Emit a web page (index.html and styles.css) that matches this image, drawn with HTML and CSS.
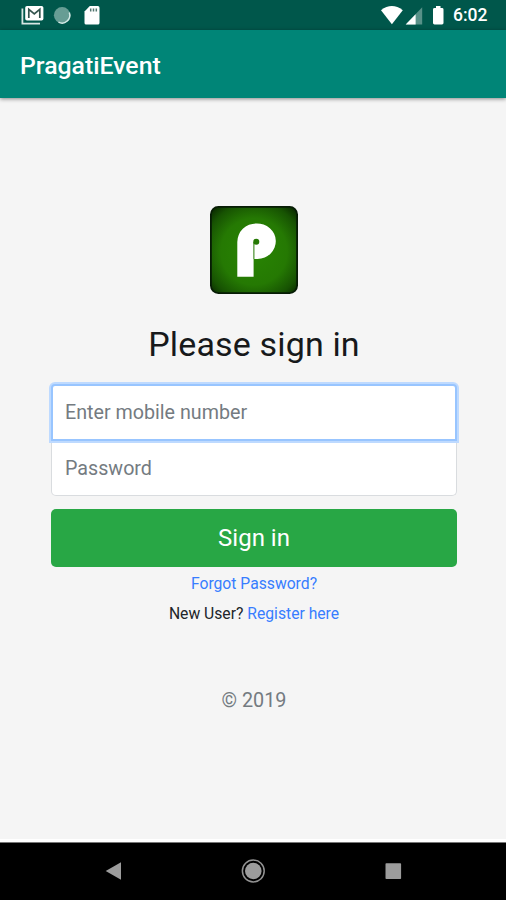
FILE: index.html
```html
<!DOCTYPE html>
<html lang="en">
<head>
<meta charset="utf-8">
<title>PragatiEvent</title>
<link rel="stylesheet" href="styles.css">
</head>
<body>
<div class="screen">
  <div class="status">
    <svg class="status-left" width="90" height="30" viewBox="0 0 90 30">
      <path d="M2.4 8.5V23.6H20" fill="none" stroke="#d7e6e3" stroke-width="1.8"/>
      <rect x="5.2" y="6" width="18.2" height="14.6" rx="1.8" fill="#fff"/>
      <path d="M8.8 18V9.3L14.3 13.8L19.8 9.3V18" fill="none" stroke="#34544e" stroke-width="1.7"/>
      <circle cx="42.1" cy="15.3" r="8.2" fill="#679d94"/>
      <path d="M49.3 12.5A7.8 7.8 0 0 1 38.5 22.2" fill="none" stroke="#d5eae6" stroke-width="1.5"/>
      <path d="M69.8 6H77.8Q79.5 6 79.5 7.7V23Q79.5 24.6 77.8 24.6H66.2Q64.5 24.6 64.5 23V11.5Z" fill="#fff"/>
      <path d="M70.7 8.5V11.5M73.5 8.5V11.5M76.3 8.5V11.5" stroke="#52766f" stroke-width="1.5"/>
    </svg>
    <div class="status-right">
      <svg width="64" height="30" viewBox="0 0 64 30">
        <path d="M0 10.2Q10.9 1.8 21.8 10.2L10.9 24.2Z" fill="#fff"/>
        <path d="M41.2 7.2V24.4H24.7Z" fill="#589188"/>
        <path d="M34.6 14.2V24.4H24.7Z" fill="#fff"/>
        <path d="M55 6H59.5V8H61Q62.5 8 62.5 9.4V23.1Q62.5 24.5 61 24.5H53.5Q52 24.5 52 23.1V9.4Q52 8 53.5 8H55Z" fill="#fff"/>
      </svg>
      <span class="clock">6:02</span>
    </div>
  </div>
  <header class="appbar">PragatiEvent</header>
  <main class="content">
    <svg class="logo" width="88" height="88" viewBox="0 0 88 88">
      <defs>
        <radialGradient id="green" cx=".5" cy=".52" r=".7">
          <stop offset="0" stop-color="#288403"/>
          <stop offset=".55" stop-color="#257903"/>
          <stop offset=".82" stop-color="#175302"/>
          <stop offset="1" stop-color="#082500"/>
        </radialGradient>
      </defs>
      <rect x=".9" y=".9" width="86.2" height="86.2" rx="7.5" fill="url(#green)" stroke="#071c05" stroke-width="1.8"/>
      <path fill="#fff" d="M27.3 70.7V36A19 18.5 0 0 1 46.3 17.4A18.9 17.8 0 0 1 47.5 53H43.6V70.7Z"/>
      <path d="M43.9 53V36" stroke="#257903" stroke-width="1"/>
      <circle cx="46.3" cy="35.8" r="3" fill="#257903"/>
    </svg>
    <h1 class="title">Please sign in</h1>
    <form class="form">
      <input class="field field-top" type="text" placeholder="Enter mobile number" aria-label="Mobile number">
      <input class="field field-bottom" type="password" placeholder="Password" aria-label="Password">
      <button class="submit" type="button">Sign in</button>
    </form>
    <div class="links"><a class="link">Forgot Password?</a></div>
    <div class="links">New User? <a class="link">Register here</a></div>
    <p class="copyright">© 2019</p>
  </main>
  <nav class="navbar">
    <svg width="24" height="24" viewBox="0 0 24 24"><path d="M4.7 12L20 3.2V20.8Z" fill="#9c9c9c"/></svg>
    <svg width="24" height="24" viewBox="0 0 24 24"><circle cx="12.3" cy="12" r="10.9" fill="none" stroke="#929292" stroke-width="1.5"/><circle cx="12.3" cy="12" r="8.3" fill="#9c9c9c"/></svg>
    <svg width="24" height="24" viewBox="0 0 24 24"><rect x="4.5" y="4.3" width="15.6" height="15.8" rx=".8" fill="#9c9c9c"/></svg>
  </nav>
</div>
</body>
</html>
```
FILE: styles.css
```css
* { box-sizing: border-box; }
body { margin: 0; font-family: Roboto, sans-serif; }
.screen { width: 506px; height: 900px; display: flex; flex-direction: column; background: #f5f5f5; overflow: hidden; }
.status { height: 30px; flex: none; display: flex; justify-content: space-between; background: #00574b; padding: 0 18px 0 20px; }
.status-right { display: flex; align-items: center; }
.status-right svg { margin-right: 8px; overflow: visible; }
.clock { color: #fff; font-size: 17.5px; font-weight: 500; line-height: 32px; width: 35px; white-space: nowrap; }
.appbar { height: 68px; flex: none; padding-left: 20px; background: #008577; color: #fff; font-size: 24.8px; font-weight: 500; line-height: 72px; box-shadow: 0 1px 4px rgba(0, 0, 0, .45); }
.content { flex: 1; display: flex; flex-direction: column; align-items: center; padding: 108px 0 0 2px; border-bottom: 3px solid #fff; color: #212529; }
.logo { display: block; flex: none; }
.title { margin: 30px 0 20px; font-size: 34px; font-weight: 400; line-height: 40px; color: #17191b; letter-spacing: .15px; }
.form { width: 406px; display: flex; flex-direction: column; }
.field { width: 100%; font: 400 19.7px/24px Roboto, sans-serif; color: #495057; background: #fff; padding: 0 13px; border: 1px solid #d9dcdf; outline: 0; }
.field::placeholder { color: #747b81; opacity: 1; }
.field-top { position: relative; height: 57px; border: 2px solid #98c5ff; border-radius: 4px 4px 0 0; box-shadow: 0 0 0 2px #bedaff; z-index: 1; padding: 0 12px; }
.field-bottom { height: 55px; border-top: 0; border-radius: 0 0 5px 5px; }
.submit { height: 58px; margin-top: 13px; border: 0; border-radius: 5px; background: #28a745; color: #fff; font: 400 24px/58px Roboto, sans-serif; padding: 0; }
.links { height: 30px; font-size: 15.7px; line-height: 34px; }
.link { color: #377dff; }
.copyright { margin: 59px 0 0; font-size: 19.8px; line-height: 30px; color: #747b81; }
.navbar { height: 58px; flex: none; display: flex; justify-content: space-between; align-items: center; padding: 0 101px 2px; background: #000; border-top: 1px solid #777; }
```
